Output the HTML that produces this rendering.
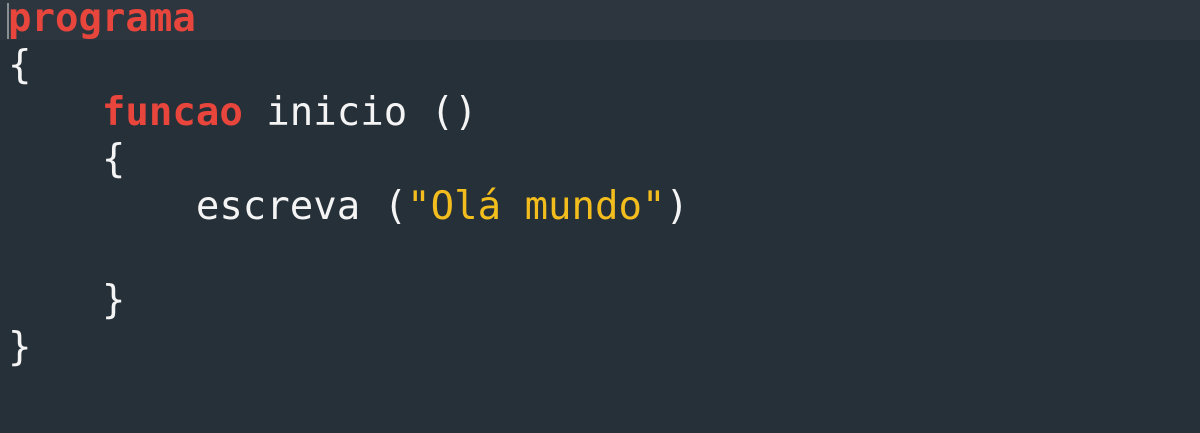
<!DOCTYPE html>
<html><head><meta charset="utf-8"><style>
html,body{margin:0;padding:0;width:1200px;height:433px;overflow:hidden;background:#263039;}
.hl{position:absolute;left:0;top:0;width:1200px;height:40px;background:#2d363f;}
.cur{position:absolute;left:7px;top:3px;width:2px;height:36px;background:#8a8f94;}
pre{position:absolute;left:8px;top:-5px;margin:0;font-family:"DejaVu Sans Mono","Liberation Mono",monospace;font-size:39px;line-height:47px;color:#f4f4f4;}
.k{color:#e8453c;font-weight:bold;}
.s{color:#f2bd1d;}
</style></head><body>
<div class="hl"></div><div class="cur"></div>
<pre><span class="k">programa</span>
{
    <span class="k">funcao</span> inicio ()
    {
        escreva (<span class="s">"Olá mundo"</span>)

    }
}</pre>
</body></html>
